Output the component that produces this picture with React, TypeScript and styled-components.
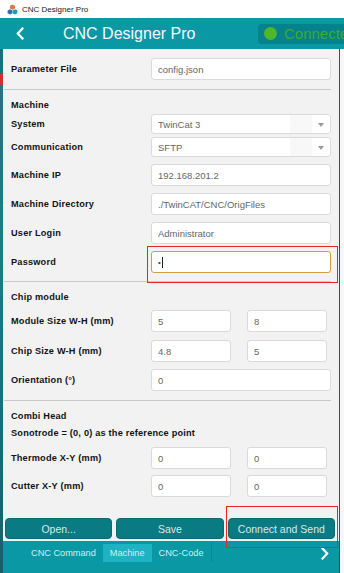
import React from 'react'
import styled, { createGlobalStyle } from 'styled-components'

const GlobalStyle = createGlobalStyle`
  html, body {
    margin: 0;
    padding: 0;
    background: #fff;
    overflow: hidden;
  }
  * {
    box-sizing: border-box;
  }
`

type Field =
  | { kind: 'text'; label: string; value: string; gap: number }
  | { kind: 'select'; label: string; value: string; gap: number }
  | { kind: 'pair'; label: string; values: [string, string]; gap: number }

const machineFields: Field[] = [
  { kind: 'select', label: 'System', value: 'TwinCat 3', gap: 4 },
  { kind: 'select', label: 'Communication', value: 'SFTP', gap: 3 },
  { kind: 'text', label: 'Machine IP', value: '192.168.201.2', gap: 7 },
  { kind: 'text', label: 'Machine Directory', value: './TwinCAT/CNC/OrigFiles', gap: 7 },
  { kind: 'text', label: 'User Login', value: 'Administrator', gap: 7 },
]

const chipFields: Field[] = [
  { kind: 'pair', label: 'Module Size W-H (mm)', values: ['5', '8'], gap: 8 },
  { kind: 'pair', label: 'Chip Size W-H (mm)', values: ['4.8', '5'], gap: 8 },
  { kind: 'text', label: 'Orientation (°)', value: '0', gap: 7 },
]

const headFields: Field[] = [
  { kind: 'pair', label: 'Thermode X-Y (mm)', values: ['0', '0'], gap: 9 },
  { kind: 'pair', label: 'Cutter X-Y (mm)', values: ['0', '0'], gap: 6 },
]

const tabs = ['CNC Command', 'Machine', 'CNC-Code']

const AppIcon = () => (
  <svg width='11' height='11' viewBox='0 0 11 11'>
    <path d='M5.5 0.5 L8 1.8 V4.4 L5.5 5.7 L3 4.4 V1.8 Z' fill='#e8743b' />
    <path d='M3 5.2 L5.4 6.4 V9.2 L3 10.5 L0.6 9.2 V6.4 Z' fill='#2f6fb5' />
    <path d='M8 5.2 L10.4 6.4 V9.2 L8 10.5 L5.6 9.2 V6.4 Z' fill='#1c9fb0' />
  </svg>
)

const Chevron = ({ dir }: { dir: 'left' | 'right' }) => (
  <svg width='8' height='13' viewBox='0 0 8 13'>
    <path
      d={dir === 'left' ? 'M6.5 1.5 L1.8 6.5 L6.5 11.5' : 'M1.5 1.5 L6.2 6.5 L1.5 11.5'}
      fill='none'
      stroke='#fff'
      strokeWidth='2.2'
      strokeLinecap='square'
    />
  </svg>
)

const FieldRow = ({ field }: { field: Field }) => (
  <Row $gap={field.gap} $tall={field.kind !== 'select'}>
    <Label>{field.label}</Label>
    {field.kind === 'text' && <TextBox readOnly defaultValue={field.value} />}
    {field.kind === 'select' && (
      <SelectBox>
        <SelectValue>{field.value}</SelectValue>
        <SelectShade />
        <SelectCaret />
      </SelectBox>
    )}
    {field.kind === 'pair' && (
      <Pair>
        <TextBox readOnly defaultValue={field.values[0]} />
        <TextBox readOnly defaultValue={field.values[1]} />
      </Pair>
    )}
  </Row>
)

export default function App() {
  return (
    <Window>
      <GlobalStyle />
      <TitleBar>
        <AppIcon />
        <span>CNC Designer Pro</span>
      </TitleBar>

      <Header>
        <BackButton>
          <Chevron dir='left' />
        </BackButton>
        <HeaderTitle>CNC Designer Pro</HeaderTitle>
        <StatusBadge>
          <StatusDot />
          <StatusText>Connected</StatusText>
        </StatusBadge>
      </Header>

      <Main>
        <EdgeStrip />
        <Panel>
          <Form>
            <Row $gap={0} $tall>
              <Label>Parameter File</Label>
              <TextBox readOnly defaultValue='config.json' />
            </Row>

            <Divider $gap={9} />
            <SectionTitle $gap={10}>Machine</SectionTitle>
            {machineFields.map((f) => (
              <FieldRow key={f.label} field={f} />
            ))}
            <Row $gap={7} $tall>
              <Label>Password</Label>
              <PasswordBox>
                •<Caret />
              </PasswordBox>
            </Row>

            <Divider $gap={8} />
            <SectionTitle $gap={10}>Chip module</SectionTitle>
            {chipFields.map((f) => (
              <FieldRow key={f.label} field={f} />
            ))}

            <Divider $gap={9} />
            <SectionTitle $gap={10}>Combi Head</SectionTitle>
            <SectionTitle $gap={7}>Sonotrode = (0, 0) as the reference point</SectionTitle>
            {headFields.map((f) => (
              <FieldRow key={f.label} field={f} />
            ))}

            <ActionBar>
              <ActionButton>Open...</ActionButton>
              <ActionButton>Save</ActionButton>
              <ActionButton>Connect and Send</ActionButton>
            </ActionBar>
          </Form>

          <TabBar>
            {tabs.map((t) => (
              <Tab key={t} $active={t === 'Machine'}>
                {t}
              </Tab>
            ))}
            <TabSep />
            <NextButton>
              <Chevron dir='right' />
            </NextButton>
          </TabBar>
        </Panel>
        <RightRule />
        <RightMargin />
      </Main>

      <Annotation style={{ left: 147, top: 246, width: 191, height: 37 }} />
      <Annotation style={{ left: 226, top: 506, width: 112, height: 42 }} />
    </Window>
  )
}

const Window = styled.div`
  position: relative;
  width: 344px;
  height: 573px;
  display: flex;
  flex-direction: column;
  font-family: 'Liberation Sans', Arial, sans-serif;
  overflow: hidden;
`
const TitleBar = styled.div`
  height: 18px;
  flex-shrink: 0;
  display: flex;
  align-items: center;
  gap: 4px;
  padding-left: 7px;
  background: #fff;
  font-size: 8px;
  color: #1a1a1a;
`
const Header = styled.div`
  height: 31px;
  flex-shrink: 0;
  display: flex;
  align-items: center;
  background: #0b98a5;
  color: #fff;
  overflow: hidden;
`
const BackButton = styled.div`
  width: 63px;
  flex-shrink: 0;
  display: flex;
  align-items: center;
  padding-left: 16px;
`
const HeaderTitle = styled.div`
  flex: 0 0 195px;
  font-size: 16px;
  color: #f4fbfc;
`
const StatusBadge = styled.div`
  flex-shrink: 0;
  width: 110px;
  height: 20px;
  display: flex;
  align-items: center;
  gap: 7px;
  padding-left: 6px;
  border-radius: 4px;
  background: #07818c;
`
const StatusDot = styled.span`
  width: 13px;
  height: 13px;
  border-radius: 50%;
  background: #4fb82a;
`
const StatusText = styled.span`
  font-size: 15px;
  color: #3eaa2c;
  white-space: nowrap;
`
const Main = styled.div`
  flex: 1;
  display: flex;
  min-height: 0;
`
const EdgeStrip = styled.div`
  width: 3px;
  background: linear-gradient(
    to bottom,
    #1b6f7c 0,
    #1b6f7c 24px,
    #c0392b 24px,
    #c0392b 36px,
    #2d6f86 36px,
    #1f7a87 200px,
    #16606c 100%
  );
`
const Panel = styled.div`
  width: 336px;
  display: flex;
  flex-direction: column;
`
const RightRule = styled.div`
  width: 1px;
  background: #4b4b4b;
`
const RightMargin = styled.div`
  flex: 1;
  background: #f7f7f7;
`
const Form = styled.div`
  flex: 1;
  display: flex;
  flex-direction: column;
  padding: 9px 8px 2px 8px;
  background: #f2f2f2;
`
const Row = styled.div<{ $gap: number; $tall: boolean }>`
  display: grid;
  grid-template-columns: 140px 180px;
  align-items: center;
  height: ${(p) => (p.$tall ? 22 : 20)}px;
  margin-top: ${(p) => p.$gap}px;
`
const Label = styled.div`
  font-size: 9.2px;
  font-weight: 700;
  letter-spacing: 0.2px;
  color: #141414;
  white-space: nowrap;
`
const SectionTitle = styled(Label)<{ $gap: number }>`
  height: 10px;
  line-height: 10px;
  margin-top: ${(p) => p.$gap}px;
`
const boxBase = `
  height: 100%;
  width: 100%;
  background: #fff;
  border: 1px solid #dadada;
  border-radius: 3px;
  padding: 0 6px;
  font-family: 'Liberation Sans', Arial, sans-serif;
  font-size: 9.5px;
  color: #666;
`
const TextBox = styled.input`
  ${boxBase}
  outline: none;
`
const PasswordBox = styled.div`
  ${boxBase}
  display: flex;
  align-items: center;
  border-color: #cf9f3c;
  font-size: 8px;
  color: #444;
`
const Caret = styled.span`
  width: 1px;
  height: 11px;
  margin-left: 1px;
  background: #222;
`
const SelectBox = styled.div`
  ${boxBase}
  display: flex;
  align-items: center;
  padding-right: 0;
`
const SelectValue = styled.span`
  flex: 1;
`
const SelectShade = styled.span`
  width: 22px;
  height: 100%;
  background: #f8f8f8;
`
const SelectCaret = styled.span`
  width: 18px;
  display: flex;
  justify-content: center;
  &::after {
    content: '';
    border-left: 3.5px solid transparent;
    border-right: 3.5px solid transparent;
    border-top: 4px solid #9a9a9a;
    margin-top: 2px;
  }
`
const Pair = styled.div`
  display: grid;
  grid-template-columns: 80px 80px;
  gap: 16px;
  height: 100%;
`
const Divider = styled.div<{ $gap: number }>`
  height: 1px;
  margin: ${(p) => p.$gap}px 0 0 -7px;
  width: 327px;
  background: #c9c9c9;
`
const ActionBar = styled.div`
  margin: auto -4px 0 -6px;
  display: grid;
  grid-template-columns: repeat(3, 1fr);
  gap: 4px;
  height: 21px;
`
const ActionButton = styled.button`
  border: 1px solid #0a6c72;
  border-radius: 4px;
  background: #0b7b83;
  color: #d2eaec;
  font-family: 'Liberation Sans', Arial, sans-serif;
  font-size: 10.5px;
  padding: 0;
`
const TabBar = styled.div`
  height: 32px;
  flex-shrink: 0;
  display: flex;
  align-items: flex-start;
  padding-left: 21px;
  background: #0b98a5;
`
const Tab = styled.div<{ $active: boolean }>`
  height: 18px;
  margin-top: 3px;
  padding: 0 7px;
  display: flex;
  align-items: center;
  font-size: 9.2px;
  color: #d3eef1;
  background: ${(p) => (p.$active ? '#1db3c3' : 'transparent')};
`
const TabSep = styled.div`
  width: 1px;
  height: 19px;
  margin-top: 2px;
  background: #0a8591;
`
const NextButton = styled.div`
  margin-left: auto;
  margin-top: 6px;
  padding-right: 10px;
  display: flex;
`
const Annotation = styled.div`
  position: absolute;
  border: 1px solid #e2262b;
  pointer-events: none;
`
